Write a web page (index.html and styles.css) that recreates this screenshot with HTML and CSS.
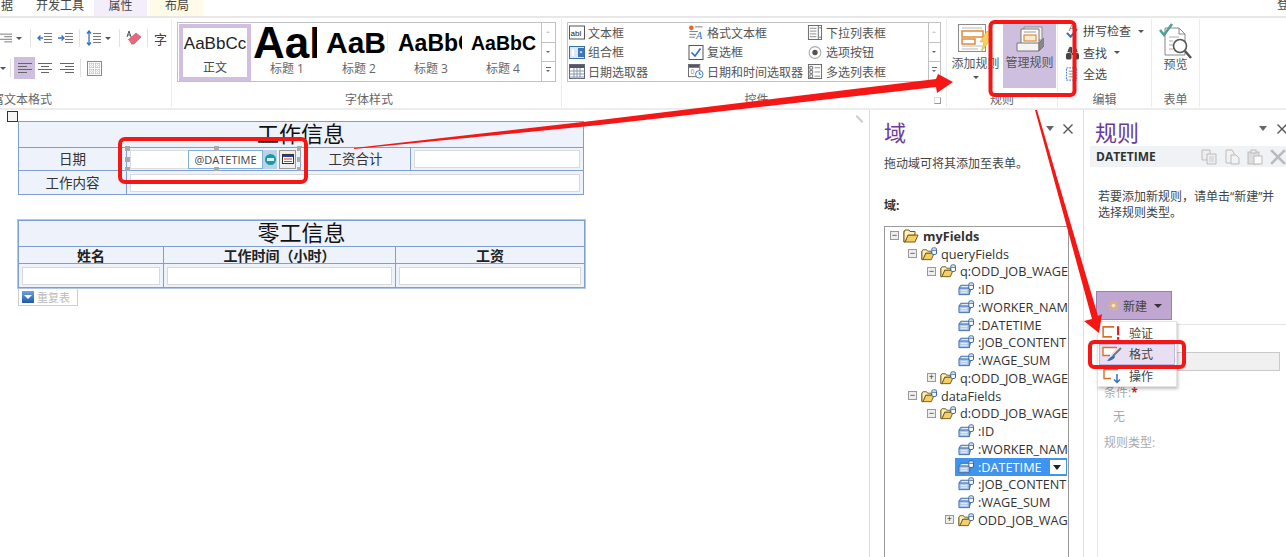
FILE: index.html
```html
<!DOCTYPE html>
<html lang="zh-CN">
<head>
<meta charset="utf-8">
<title>InfoPath 表单设计</title>
<link rel="stylesheet" href="styles.css">
</head>
<body>
<svg class="defs" width="0" height="0">
  <defs>
    <symbol id="folder" viewBox="0 0 16 14"><path d="M1 2V13H12L15 6H5L2 13" fill="#f6cf62" stroke="#6e5a1e"/><path d="M1 3L2 1H6L7 2.500H12V6H5L2 13L1 13Z" fill="#fff0bd" stroke="#6e5a1e"/></symbol>
    <symbol id="dbfolder" viewBox="0 0 17 14"><path d="M1 4V13H11L14 6H5L2 13" fill="#f6cf62" stroke="#6e5a1e"/><path d="M1 4L2 2.500H6L7 4H11V6H5L2 13H1Z" fill="#fff0bd" stroke="#6e5a1e"/><rect x="11.500" y=".5" width="5" height="7" rx="1.500" fill="#fff" stroke="#2d5c9e"/><path d="M12 3H16" stroke="#2d5c9e"/></symbol>
    <symbol id="leaf" viewBox="0 0 17 14"><path d="M1 6L3 3H14V5L12 13H1Z" fill="#a9c6ea" stroke="#3f6ca8"/><path d="M1 6H12V13" fill="none" stroke="#3f6ca8"/><path d="M3 8.500H10M3 10.500H10M4 4.500H13" stroke="#eaf2fb"/><rect x="11.500" y=".5" width="5" height="7" rx="1.500" fill="#fff" stroke="#2d5c9e"/><path d="M12 3H16" stroke="#2d5c9e"/></symbol>
    <symbol id="al" viewBox="0 0 14 12"><path d="M0 1.500H14M0 4.500H9M0 7.500H14M0 10.500H9" stroke="#666"/></symbol>
    <symbol id="ac" viewBox="0 0 14 12"><path d="M0 1.500H14M3 4.500H11M0 7.500H14M3 10.500H11" stroke="#666"/></symbol>
    <symbol id="ar" viewBox="0 0 14 12"><path d="M0 1.500H14M5 4.500H14M0 7.500H14M5 10.500H14" stroke="#666"/></symbol>
    <symbol id="outd" viewBox="0 0 15 12"><path d="M7 1.500H15M7 4.500H15M7 7.500H15M7 10.500H15" stroke="#777"/><path d="M6 6H1M3.500 3.500L1 6L3.500 8.500" fill="none" stroke="#2f74c4" stroke-width="1.300"/></symbol>
    <symbol id="ind" viewBox="0 0 15 12"><path d="M7 1.500H15M7 4.500H15M7 7.500H15M7 10.500H15" stroke="#777"/><path d="M0 6H6M3.500 3.500L6 6L3.500 8.500" fill="none" stroke="#2f74c4" stroke-width="1.300"/></symbol>
    <symbol id="lsp" viewBox="0 0 15 16"><path d="M7 3.500H15M7 6.500H15M7 9.500H15M7 12.500H15" stroke="#777"/><path d="M3 1V15M1 3.500L3 1L5 3.500M1 12.500L3 15L5 12.500" fill="none" stroke="#2f74c4" stroke-width="1.300"/></symbol>
    <symbol id="eraser" viewBox="0 0 16 17"><path d="M2 10L10 3L15 7L8 14H5Z" fill="#e8697f" stroke="#c84a62" stroke-width=".6"/><path d="M2 10L5 14" stroke="#fff"/><path d="M3 1L1 7M3 1L5 7M1.700 5H4.300" stroke="#555" fill="none"/></symbol>
    <symbol id="grid" viewBox="0 0 15 15"><rect x=".5" y=".5" width="14" height="14" fill="#fff" stroke="#888"/><path d="M3 2V13M6 2V13M9 2V13M12 2V13M2 3H13M2 6H13M2 9H13M2 12H13" stroke="#aaa" stroke-dasharray="1 1"/></symbol>
    <symbol id="c-text" viewBox="0 0 16 14"><rect x=".5" y=".5" width="15" height="13" fill="#fff" stroke="#555"/><text x="1.500" y="10" font-size="8" font-family="Liberation Sans" fill="#222">abl</text></symbol>
    <symbol id="c-combo" viewBox="0 0 16 13"><rect x=".5" y=".5" width="15" height="12" fill="#dce8f6" stroke="#3c6ea8"/><rect x="3" y="3" width="2" height="7" fill="#fff"/><rect x="9" y="2" width="6" height="9" fill="#3c76bd"/><path d="M10.500 5.500H13.500L12 7.500Z" fill="#fff"/></symbol>
    <symbol id="c-date" viewBox="0 0 16 15"><rect x=".5" y=".5" width="15" height="14" fill="#fff" stroke="#667"/><rect x="1" y="1" width="14" height="3" fill="#556"/><path d="M1 7H15M1 10H15M1 13H15M5 4V15M8 4V15M11 4V15" stroke="#89a"/></symbol>
    <symbol id="c-cal" viewBox="0 0 12 10"><rect x=".5" y=".5" width="11" height="9" fill="#fff" stroke="#333"/><rect x="1" y="1" width="10" height="2" fill="#2d3f9e"/><path d="M2 5H10" stroke="#d33"/><path d="M2 7.500H10" stroke="#4a6fc0"/></symbol>
    <symbol id="c-rich" viewBox="0 0 16 16"><circle cx="3" cy="3" r="2.500" fill="#e06a2b"/><path d="M7 2H15M1 7H10M1 10H8M1 13H7" stroke="#777"/><text x="8" y="15" font-size="11" font-style="italic" font-family="Liberation Serif" fill="#2f74c4">A</text></symbol>
    <symbol id="c-check" viewBox="0 0 15 15"><rect x=".5" y=".5" width="14" height="14" fill="#fff" stroke="#555"/><path d="M3 7.500L6.500 11L12 3.500" fill="none" stroke="#2f74c4" stroke-width="1.700"/></symbol>
    <symbol id="c-dt" viewBox="0 0 17 16"><rect x=".5" y=".5" width="12" height="13" fill="#fff" stroke="#667"/><rect x="1" y="1" width="11" height="3" fill="#556"/><text x="3" y="11" font-size="7" fill="#d9702a" font-family="Liberation Sans">0</text><circle cx="12" cy="11" r="4" fill="#fff" stroke="#2f74c4"/><path d="M12 8.500V11H14" stroke="#2f74c4" fill="none"/></symbol>
    <symbol id="c-list" viewBox="0 0 15 16"><rect x=".5" y=".5" width="14" height="15" fill="#fff" stroke="#666"/><path d="M2 3.500H9M2 6.500H9M2 9.500H9M2 12.500H9" stroke="#888"/><path d="M11 1V15" stroke="#666"/><path d="M12 3H14M12 13H14" stroke="#666"/></symbol>
    <symbol id="c-radio" viewBox="0 0 14 14"><circle cx="7" cy="7" r="5.500" fill="#fff" stroke="#aaa"/><circle cx="7" cy="7" r="2.500" fill="#555"/></symbol>
    <symbol id="c-multi" viewBox="0 0 15 16"><rect x=".5" y=".5" width="14" height="15" fill="#fff" stroke="#666"/><path d="M2 2.500H5V5.500H2ZM2 7H5V10H2ZM2 11.500H5V14.500H2Z" fill="none" stroke="#666"/><path d="M7 4H13M7 8.500H13M7 13H13" stroke="#888"/></symbol>
    <symbol id="r-add" viewBox="0 0 35 28"><rect x=".5" y=".5" width="27" height="27" fill="#fdfdfd" stroke="#8a8a8a"/><path d="M4 4H24M4 22H24M4 25H20" stroke="#bbb"/><rect x="4" y="7" width="21" height="6" fill="#fff" stroke="#e08a3c" stroke-width="1.500"/><rect x="4" y="15" width="13" height="5" fill="#fff" stroke="#e08a3c" stroke-width="1.500"/><path d="M29 7L22 18H26L23 28L34 14H29L33 7Z" fill="#f3d15f" stroke="#dba52c" stroke-width=".5"/></symbol>
    <symbol id="r-man" viewBox="0 0 28 26"><path d="M8 1H26V14H8Z" fill="#f2f2f2" stroke="#8a8a8a"/><path d="M5 3H23V18H5Z" fill="#fff" stroke="#777"/><path d="M8 6H20" stroke="#999"/><rect x="8" y="9" width="12" height="6" fill="#f9ecd2" stroke="#e08a3c" stroke-width="1.200"/><path d="M1 17H23V25H1Z" fill="#f5f5f5" stroke="#777"/><path d="M23 17L28 12V20L23 25Z" fill="#888" stroke="#777"/></symbol>
    <symbol id="spell" viewBox="0 0 16 16"><text x="4" y="8" font-size="9" fill="#555" font-family="Liberation Sans">A</text><path d="M2 10L6 14L13 6" fill="none" stroke="#2f74c4" stroke-width="2.200"/></symbol>
    <symbol id="find" viewBox="0 0 16 16"><path d="M3 7L5 2H7V8M13 7L11 2H9V8" fill="#555" stroke="#333"/><rect x="1" y="8" width="6" height="7" rx="2" fill="#444"/><rect x="9" y="8" width="6" height="7" rx="2" fill="#444"/><path d="M7 9H9" stroke="#333" stroke-width="2"/></symbol>
    <symbol id="selall" viewBox="0 0 16 16"><rect x="1.500" y="1.500" width="11" height="13" fill="none" stroke="#2f74c4" stroke-dasharray="2 1"/><path d="M4 5H10M4 8H10M4 11H10" stroke="#888"/></symbol>
    <symbol id="preview" viewBox="0 0 34 36"><path d="M6 5H20L26 11V32H6Z" fill="#fff" stroke="#888"/><path d="M20 5V11H26" fill="none" stroke="#888"/><path d="M10 14H20M10 18H14M10 22H14M10 26H14" stroke="#aaa"/><path d="M1 7L5 12L13 1" fill="none" stroke="#4d9f95" stroke-width="2.500"/><circle cx="21" cy="23" r="6.500" fill="#fff" stroke="#555" stroke-width="1.600"/><path d="M26 28L32 35" stroke="#555" stroke-width="2.500"/></symbol>
    <symbol id="copy" viewBox="0 0 16 16"><path d="M1 1H9V11H1Z" fill="#eee" stroke="#bbb"/><path d="M6 5H15V15H6Z" fill="#eee" stroke="#bbb"/><path d="M8 8H13M8 10H13M8 12H13" stroke="#ccc"/></symbol>
    <symbol id="cut" viewBox="0 0 16 16"><path d="M2 1H8L10 4V14H2Z" fill="#f2f2f2" stroke="#bbb"/><path d="M7 6H12L15 9V15H7Z" fill="#f2f2f2" stroke="#bbb"/></symbol>
    <symbol id="paste" viewBox="0 0 16 16"><rect x="1" y="3" width="11" height="12" fill="#ddd" stroke="#bbb"/><rect x="4" y="1" width="5" height="3" fill="#eee" stroke="#bbb"/><rect x="7" y="7" width="8" height="8" fill="#fafafa" stroke="#bbb"/></symbol>
    <symbol id="del" viewBox="0 0 14 14"><path d="M1 1L13 13M13 1L1 13" stroke="#bbb" stroke-width="2.400"/></symbol>
    <symbol id="close" viewBox="0 0 10 10"><path d="M.5 .5L9.500 9.500M9.500 .5L.5 9.500" stroke="#555" stroke-width="1.400"/></symbol>
    <symbol id="sun" viewBox="0 0 14 14"><path d="M7 1V13M1 7H13M2.700 2.700L11.300 11.300M11.300 2.700L2.700 11.300" stroke="#e9b84c" stroke-width="1.400"/><circle cx="7" cy="7" r="2" fill="#f8e6b8"/></symbol>
    <symbol id="m-val" viewBox="0 0 18 14"><path d="M11 1.500H1V10.500H9" fill="none" stroke="#d9702a" stroke-width="1.400"/><path d="M14.500 1V9M14.500 10.500V13" stroke="#d22" stroke-width="2"/></symbol>
    <symbol id="m-fmt" viewBox="0 0 20 16"><path d="M15 1.500H1V9.500H8" fill="#fff" stroke="#d9702a" stroke-width="1.400"/><path d="M19 2L11 10" stroke="#777" stroke-width="2"/><path d="M12 9C10 10 7 12 5 15C9 15 12 13 13 11Z" fill="#3a6ea8"/></symbol>
    <symbol id="m-act" viewBox="0 0 18 16"><path d="M15 1.500H1V10.500H8" fill="none" stroke="#d9702a" stroke-width="1.400"/><path d="M14 6V14M11 11.500L14 14.500L17 11.500" fill="none" stroke="#2f74c4" stroke-width="1.500"/></symbol>
  </defs>
</svg>

<div class="app">
  <nav class="tabs">
    <span class="tab tab-cut">据</span>
    <span class="tab tab-dev">开发工具</span>
    <span class="tab tab-prop">属性</span>
    <span class="tab tab-layout">布局</span>
    <span class="login">登</span>
  </nav>

  <section class="ribbon">
    <div class="group g1">
      <div class="g-body rows">
        <div class="tool-row">
          <svg class="ic ic-cutlist"><use href="#ar"/></svg><i class="caret c1"></i><b class="vsep s1"></b>
          <svg class="ic i15"><use href="#outd"/></svg><svg class="ic i15 m6"><use href="#ind"/></svg><b class="vsep s2"></b>
          <svg class="ic i15b"><use href="#lsp"/></svg><i class="caret c2"></i><b class="vsep s3"></b>
          <svg class="ic i16"><use href="#eraser"/></svg><b class="vsep s4"></b>
          <span class="zi">字</span>
        </div>
        <div class="tool-row row2">
          <i class="caret c0"></i><b class="vsep s5"></b>
          <span class="on"><svg class="ic i14"><use href="#al"/></svg></span>
          <svg class="ic i14 m3"><use href="#ac"/></svg><svg class="ic i14 m8"><use href="#ar"/></svg><b class="vsep s6"></b>
          <svg class="ic i-grid"><use href="#grid"/></svg>
        </div>
      </div>
      <div class="g-label lab-left">富文本格式</div>
    </div>

    <div class="group g2">
      <div class="g-body">
        <div class="gallery gal-style">
          <div class="style sel"><div class="s-sample s0">AaBbCc</div><div class="s-name">正文</div></div>
          <div class="style st1"><div class="s-sample s1b">AaBbCc</div><div class="s-name">标题 1</div></div>
          <div class="style st2"><div class="s-sample s2b">AaBbCc</div><div class="s-name">标题 2</div></div>
          <div class="style st3"><div class="s-sample s3b">AaBbCc</div><div class="s-name">标题 3</div></div>
          <div class="style st4"><div class="s-sample s4b">AaBbCc</div><div class="s-name">标题 4</div></div>
          <div class="scroller"><span class="up"></span><span class="dn"></span><span class="more"></span></div>
        </div>
      </div>
      <div class="g-label">字体样式</div>
    </div>

    <div class="group g3">
      <div class="g-body">
        <div class="gallery gal-ctl">
          <div class="ctl-grid">
            <span class="ctl"><svg><use href="#c-text"/></svg>文本框</span>
            <span class="ctl"><svg><use href="#c-rich"/></svg>格式文本框</span>
            <span class="ctl"><svg><use href="#c-list"/></svg>下拉列表框</span>
            <span class="ctl"><svg><use href="#c-combo"/></svg>组合框</span>
            <span class="ctl"><svg><use href="#c-check"/></svg>复选框</span>
            <span class="ctl"><svg><use href="#c-radio"/></svg>选项按钮</span>
            <span class="ctl"><svg><use href="#c-date"/></svg>日期选取器</span>
            <span class="ctl"><svg><use href="#c-dt"/></svg>日期和时间选取器</span>
            <span class="ctl"><svg><use href="#c-multi"/></svg>多选列表框</span>
          </div>
          <div class="scroller small"><span class="up"></span><span class="dn"></span><span class="more"></span></div>
        </div>
      </div>
      <div class="g-label">控件</div>
      <i class="launcher"></i>
    </div>

    <div class="group g4">
      <div class="g-body big-row">
        <div class="big add"><svg class="r-add"><use href="#r-add"/></svg><span>添加规则</span><i class="caret"></i></div>
        <div class="big man"><svg class="r-man"><use href="#r-man"/></svg><span>管理规则</span></div>
      </div>
      <div class="g-label">规则</div>
    </div>

    <div class="group g5">
      <div class="g-body edit">
        <span class="edit-item"><svg><use href="#spell"/></svg>拼写检查<i class="caret"></i></span>
        <span class="edit-item"><svg><use href="#find"/></svg>查找<i class="caret"></i></span>
        <span class="edit-item"><svg><use href="#selall"/></svg>全选</span>
      </div>
      <div class="g-label">编辑</div>
    </div>

    <div class="group g6">
      <div class="g-body prev"><svg class="r-prev"><use href="#preview"/></svg><span>预览</span></div>
      <div class="g-label">表单</div>
    </div>
    <div class="collapse"></div>
  </section>

  <main class="work">
    <div class="canvas">
      <div class="anchor"></div>
      <table class="form t1">
        <colgroup><col class="c108"><col class="c174"><col class="c110"><col></colgroup>
        <tr class="h26"><td colspan="4" class="title">工作信息</td></tr>
        <tr class="h23">
          <td class="lbl">日期</td>
          <td class="datecell">
            <div class="picker">
              <span class="dp-blank"></span>
              <span class="dp-val">@DATETIME</span>
              <span class="dp-fn"><i></i></span>
              <span class="dp-cal"><svg><use href="#c-cal"/></svg></span>
            </div>
            <u class="h tl"></u><u class="h tc"></u><u class="h tr"></u><u class="h ml"></u><u class="h mr"></u><u class="h bl"></u><u class="h bc"></u><u class="h br"></u>
          </td>
          <td class="lbl">工资合计</td>
          <td class="lbl"><div class="input"></div></td>
        </tr>
        <tr class="h24">
          <td class="lbl">工作内容</td>
          <td colspan="3" class="lbl"><div class="input"></div></td>
        </tr>
      </table>

      <table class="form t2">
        <colgroup><col class="c145"><col class="c232"><col></colgroup>
        <tr class="h25"><td colspan="3" class="title">零工信息</td></tr>
        <tr class="h17 bold"><td>姓名</td><td>工作时间（小时）</td><td>工资</td></tr>
        <tr class="h24"><td class="lbl"><div class="input"></div></td><td class="lbl"><div class="input"></div></td><td class="lbl"><div class="input"></div></td></tr>
      </table>
      <div class="repeat"><span class="rep-ic"></span>重复表</div>
    </div>

    <div class="gutter"><i></i></div>

    <aside class="pane fields">
      <header class="p-head"><h2>域</h2><i class="tri"></i><svg class="x"><use href="#close"/></svg></header>
      <p class="hint">拖动域可将其添加至表单。</p>
      <p class="f-lab">域:</p>
      <div class="tree">
        <div class="node l0 strong"><b class="box">−</b><svg class="ti"><use href="#folder"/></svg>myFields</div>
        <div class="node l1"><b class="box">−</b><svg class="ti"><use href="#dbfolder"/></svg>queryFields</div>
        <div class="node l2"><b class="box">−</b><svg class="ti"><use href="#dbfolder"/></svg>q:ODD_JOB_WAGE</div>
        <div class="node l3"><b class="nobox"></b><svg class="ti"><use href="#leaf"/></svg>:ID</div>
        <div class="node l3"><b class="nobox"></b><svg class="ti"><use href="#leaf"/></svg>:WORKER_NAME</div>
        <div class="node l3"><b class="nobox"></b><svg class="ti"><use href="#leaf"/></svg>:DATETIME</div>
        <div class="node l3"><b class="nobox"></b><svg class="ti"><use href="#leaf"/></svg>:JOB_CONTENT</div>
        <div class="node l3"><b class="nobox"></b><svg class="ti"><use href="#leaf"/></svg>:WAGE_SUM</div>
        <div class="node l2"><b class="box">+</b><svg class="ti"><use href="#dbfolder"/></svg>q:ODD_JOB_WAGE</div>
        <div class="node l1"><b class="box">−</b><svg class="ti"><use href="#dbfolder"/></svg>dataFields</div>
        <div class="node l2"><b class="box">−</b><svg class="ti"><use href="#dbfolder"/></svg>d:ODD_JOB_WAGE</div>
        <div class="node l3"><b class="nobox"></b><svg class="ti"><use href="#leaf"/></svg>:ID</div>
        <div class="node l3"><b class="nobox"></b><svg class="ti"><use href="#leaf"/></svg>:WORKER_NAME</div>
        <div class="node l3 picked"><b class="nobox"></b><span class="pick-bar"><svg class="ti"><use href="#leaf"/></svg>:DATETIME<em class="pick-btn"><i></i></em></span></div>
        <div class="node l3"><b class="nobox"></b><svg class="ti"><use href="#leaf"/></svg>:JOB_CONTENT</div>
        <div class="node l3"><b class="nobox"></b><svg class="ti"><use href="#leaf"/></svg>:WAGE_SUM</div>
        <div class="node l3"><b class="box">+</b><svg class="ti"><use href="#dbfolder"/></svg>ODD_JOB_WAGE</div>
      </div>
    </aside>

    <aside class="pane rules">
      <header class="p-head"><h2>规则</h2><i class="tri"></i><svg class="x"><use href="#close"/></svg></header>
      <div class="r-bar"><strong>DATETIME</strong><svg><use href="#copy"/></svg><svg><use href="#cut"/></svg><svg><use href="#paste"/></svg><svg><use href="#del"/></svg></div>
      <p class="r-hint">若要添加新规则，请单击“新建”并<br>选择规则类型。</p>
      <button class="new-btn"><svg><use href="#sun"/></svg>新建<i></i></button>
      <div class="r-form">
        <div class="r-input"></div>
        <div class="r-cap">条件:<em>*</em></div>
        <div class="r-none">无</div>
        <div class="r-cap type">规则类型:</div>
      </div>
      <div class="menu">
        <div class="m-item"><svg><use href="#m-val"/></svg>验证</div>
        <div class="m-item hot"><svg><use href="#m-fmt"/></svg>格式</div>
        <div class="m-item"><svg><use href="#m-act"/></svg>操作</div>
      </div>
    </aside>
  </main>
</div>

<svg class="marks" viewBox="0 0 1286 557">
  <rect x="120" y="139" width="186" height="43" rx="5"/>
  <rect x="990.500" y="22" width="84" height="73" rx="4"/>
  <rect x="1090" y="342" width="94" height="25" rx="4"/>
  <path class="fill" d="M354 148L600 120L936 79L938 74L953 82L937 93L936 87L600 125L354 149Z"/>
  <path class="fill" d="M1035 110H1037L1098 316L1102 314L1099 333L1084 321L1092 319Z"/>
</svg>
</body>
</html>
```

FILE: styles.css
```css
* { box-sizing: border-box; }
html, body { margin: 0; height: 557px; overflow: hidden; background: #fff; }
body { font: 12px "Open Sans", "Noto Sans CJK SC", sans-serif; color: #444; position: relative; }
p, h2 { margin: 0; }
i, em, b, u { font-style: normal; text-decoration: none; display: block; }
.defs { position: absolute; }
.app { width: 1286px; height: 557px; display: flex; flex-direction: column; overflow: hidden; }

/* tabs */
.tabs { height: 18px; display: flex; border-bottom: 2px solid #e8e8e8; font-size: 12px; line-height: 11px; color: #444; flex: none; }
.tab { height: 16px; display: block; text-align: center; overflow: hidden; }
.tab-cut { width: 13px; text-align: right; }
.tab-dev { margin-left: 23px; width: 58px; text-align: left; }
.tab-prop { width: 53px; background: #f3eefa; margin-left: 0; }
.tab-layout { width: 54px; margin-left: 3px; background: #fffbe8; }
.login { margin-left: auto; width: 9px; overflow: hidden; line-height: 10px; }

/* ribbon */
.ribbon { height: 92px; display: flex; border-bottom: 2px solid #ececec; flex: none; }
.group { position: relative; display: flex; flex-direction: column; border-right: 1px solid #ececec; height: 88px; margin-top: 1px; }
.g-body { height: 74px; flex: none; }
.g-label { height: 14px; line-height: 14px; text-align: center; color: #666; font-size: 12px; white-space: nowrap; }
.g1 { width: 172px; overflow: hidden; }
.g2 { width: 390px; padding-left: 5px; }
.g3 { width: 385px; padding-left: 5px; }
.g4 { width: 111px; }
.g5 { width: 94px; }
.g6 { width: 48px; }
.lab-left { text-align: left; margin-left: -8px; }
.collapse { flex: 1; }

.rows { display: flex; flex-direction: column; padding-top: 9px; }
.tool-row { display: flex; align-items: center; height: 20px; }
.row2 { margin-top: 9px; height: 22px; }
.ic { display: block; flex: none; }
.ic-cutlist { width: 12px; height: 12px; }
.i15 { width: 15px; height: 12px; }
.i15b { width: 15px; height: 16px; }
.i16 { width: 16px; height: 17px; }
.i14 { width: 14px; height: 12px; }
.i-grid { width: 15px; height: 15px; }
.m6 { margin-left: 6px; }
.m3 { margin-left: 3px; }
.m8 { margin-left: 8px; }
.caret { width: 0; height: 0; border: 3px solid transparent; border-top: 3px solid #555; border-bottom: 0; }
.c1 { margin-left: 4px; margin-right: 8px; }
.c2 { margin-left: 4px; margin-right: 8px; }
.c0 { margin-left: 0; }
.vsep { width: 1px; height: 18px; background: #e2e2e2; }
.s1 { margin-right: 6px; }
.s2 { margin: 0 6px; }
.s3 { margin-right: 6px; }
.s4 { margin: 0 6px 0 5px; }
.s5 { margin: 0 3px 0 4px; }
.s6 { margin: 0 6px; }
.on { width: 21px; height: 22px; background: #cfbfdf; display: flex; align-items: center; justify-content: center; }
.zi { font-size: 13px; color: #444; }

.gallery { position: relative; display: flex; margin-top: 3px; height: 60px; border: 1px solid #c2c2c2; background: #fff; }
.gal-style { width: 379px; padding: 1px 0 0 1px; }
.style { width: 72px; height: 57px; overflow: hidden; text-align: center; flex: none; }
.style.sel { border: 4px solid #d0bfe0; padding-top: 0; }
.s-sample { height: 38px; white-space: nowrap; overflow: hidden; color: #000; display: flex; align-items: center; justify-content: flex-start; font-family: "Liberation Sans", sans-serif; }
.s0 { font-size: 17px; height: 32px; color: #222; justify-content: center; }
.s1b { font-size: 44px; font-weight: 700; width: 64px; margin-left: 2px; }
.s2b { font-size: 30px; font-weight: 700; width: 62px; margin-left: 3px; }
.s3b { font-size: 23px; font-weight: 700; width: 64px; margin-left: 3px; }
.s4b { font-size: 19.500px; font-weight: 700; width: 65px; margin-left: 4px; }
.st1, .st2, .st3, .st4 { width: 72px; }
.s-name { color: #666; font-size: 12px; line-height: 14px; }
.sel .s-name { margin-top: 1px; color: #444; }
.scroller { position: absolute; right: 0; top: 0; bottom: 0; width: 14px; display: flex; flex-direction: column; border-left: 1px solid #c2c2c2; }
.scroller span { flex: 1; border-bottom: 1px solid #c2c2c2; position: relative; }
.scroller span:last-child { border-bottom: 0; }
.scroller span::after { content: ""; position: absolute; left: 4px; top: 8px; border: 2.500px solid transparent; border-top-color: #666; border-bottom: 0; }
.scroller .up::after { border-top: 0; border-bottom: 2.500px solid #ccc; }
.scroller .more::before { content: ""; position: absolute; left: 4px; top: 5px; width: 5px; height: 1px; background: #666; }
.scroller.small { width: 12px; }
.scroller.small span::after { left: 3px; }
.scroller.small .more::before { left: 3px; }

.gal-ctl { width: 374px; }
.ctl-grid { display: grid; grid-template-columns: 119px 119px 110px; grid-auto-rows: 19.500px; padding: 0 0 0 1px; }
.ctl { display: flex; align-items: center; white-space: nowrap; color: #555; font-size: 12px; }
.ctl svg { width: 16px; height: 15px; margin-right: 3px; flex: none; }
.launcher { position: absolute; right: 5px; bottom: 3px; width: 7px; height: 7px; border: 1px solid #999; border-top-color: #ddd; border-left-color: #ddd; }

.big-row { display: flex; padding-left: 1px; }
.big { display: flex; flex-direction: column; align-items: center; color: #555; white-space: nowrap; }
.big span { display: block; line-height: 14px; }
.add { width: 55px; padding-top: 5px; }
.r-add { width: 35px; height: 28px; }
.add span { margin-top: 5px; }
.add .caret { margin-top: 5px; }
.man { width: 53px; height: 66px; margin-top: 3px; background: #cfbfdf; padding-top: 4px; }
.r-man { width: 28px; height: 26px; }
.man span { margin-top: 4px; }

.edit { display: flex; flex-direction: column; padding: 1.500px 0 0 7px; gap: .5px; }
.edit-item { display: flex; align-items: center; height: 21px; color: #444; white-space: nowrap; }
.edit-item svg { width: 15px; height: 16px; margin-right: 3px; }
.edit-item .caret { margin-left: 7px; }
.prev { display: flex; flex-direction: column; align-items: center; padding-top: 4px; color: #555; }
.r-prev { width: 34px; height: 36px; }
.prev span { line-height: 14px; margin-top: -1px; }

/* workspace */
.work { flex: 1; display: flex; min-height: 0; }
.canvas { width: 852px; flex: none; padding: 1px 0 0 18px; position: relative; }
.anchor { position: absolute; left: 7px; top: 1px; width: 11px; height: 11px; border: 1px solid #333; background: #f6f6f6; }
.form { border-collapse: collapse; table-layout: fixed; width: 566px; font-family: "Noto Sans CJK SC", sans-serif; color: #333; }
.form td { border: 1px solid #7f9fd0; background: #edf2fb; text-align: center; padding: 0; line-height: 14px; position: relative; font-size: 13.500px; }
.c108 { width: 108px; }
.c174 { width: 174px; }
.c110 { width: 110px; }
.c145 { width: 145px; }
.c232 { width: 232px; }
.h26 { height: 26px; }
.h25 { height: 25px; }
.h23 { height: 23px; }
.h24 { height: 24px; }
.h17 { height: 17px; }
.form .title { font-size: 22px; color: #111; line-height: 20px; padding-bottom: 5px; }
.form .lbl { padding: 1px 2px 3px; }
.form .bold td { font-weight: 700; color: #222; font-size: 14px; padding-bottom: 1px; }
.t1 { margin-top: 10px; }
.t2 { margin-top: 25px; outline: 1px solid #b4c6e6; width: 567px; }
.input { height: 18px; background: #fff; border: 1px solid #d9d9d9; }
.lbl .input { margin: 1px 1px -1px; }
.form .datecell { background: #edf2fb; }
.picker { display: flex; align-items: stretch; height: 19px; margin: 0 0 0 3px; }
.dp-blank { width: 58px; background: #fff; border: 1px solid #ddd; border-right: 0; }
.dp-val { width: 75px; border: 1px solid #82b0e0; font: 11px/17px "Open Sans", sans-serif; color: #444; background: #fff; }
.dp-fn { width: 14px; background: #b9d3e8; display: flex; align-items: center; justify-content: center; }
.dp-fn i { width: 11px; height: 11px; border-radius: 50%; background: #1d9aa0; position: relative; }
.dp-fn i::after { content: ""; position: absolute; left: 2px; right: 2px; top: 4px; height: 3px; background: #d8f2f2; }
.dp-cal { width: 17px; margin-left: 2px; border: 1px solid #999; background: #eee; display: flex; align-items: center; justify-content: center; }
.dp-cal svg { width: 12px; height: 10px; }
.h { position: absolute; width: 5px; height: 5px; background: #aaa; }
.tl { left: -2px; top: -2px; } .tc { left: 50%; top: -2px; } .tr { right: -2px; top: -2px; }
.ml { left: -2px; top: 9px; } .mr { right: -2px; top: 9px; }
.bl { left: -2px; bottom: -2px; } .bc { left: 50%; bottom: -2px; } .br { right: -2px; bottom: -2px; }
.repeat { width: 60px; height: 18px; border: 1px solid #cfcfcf; border-top: 0; display: flex; align-items: center; color: #bbb; font-size: 11px; gap: 3px; padding-left: 3px; }
.rep-ic { display: block; width: 12px; height: 12px; background: linear-gradient(#6fa4e4, #1e58a8); position: relative; }
.rep-ic::after { content: ""; position: absolute; left: 2px; top: 4px; border: 4px solid transparent; border-top-color: #fff; border-bottom: 0; }

.gutter { width: 18px; flex: none; border-right: 1px solid #dcdcdc; background: #fff; position: relative; }
.gutter i { position: absolute; left: 3px; top: 8px; width: 9px; height: 2px; background: #ccc; transform: rotate(45deg); }

.pane { flex: none; position: relative; }
.fields { width: 214px; border-right: 1px solid #e0e0e0; padding: 0 0 0 14px; }
.rules { flex: 1; overflow: hidden; }
.p-head { height: 36px; display: flex; align-items: center; position: relative; }
.p-head h2 { font-size: 22px; font-weight: 400; color: #6a3a9a; line-height: 30px; margin-top: 8px; }
.rules .p-head { padding-left: 11px; }
.tri { position: absolute; top: 16px; left: 162px; border: 4.500px solid transparent; border-top: 5px solid #666; border-bottom: 0; }
.x { position: absolute; top: 14px; left: 179px; width: 10px; height: 10px; }
.rules .tri { left: 175px; }
.rules .x { left: 193px; }
.hint { margin-top: 10px; line-height: 16px; color: #444; font-size: 12px; }
.f-lab { margin-top: 26px; font-weight: 700; line-height: 16px; font-size: 12px; color: #333; }
.tree { margin-top: 12px; width: 185px; height: 340px; border: 1px solid #999; background: #fff; overflow: hidden; font-size: 12px; color: #333; }
.node { height: 17.750px; display: flex; align-items: center; white-space: nowrap; padding-left: 5px; font-size: 12.700px; }
.l1 { padding-left: 23px; }
.l2 { padding-left: 42px; }
.l3 { padding-left: 60px; }
.strong { font-weight: 700; }
.box { width: 9px; height: 9px; margin-right: 4px; flex: none; border: 1px solid #999; background: #eee; font: 9px/7px "Liberation Sans", sans-serif; text-align: center; color: #333; }
.nobox { width: 13px; height: 1px; flex: none; }
.ti { width: 16px; height: 14px; margin-right: 4px; flex: none; }
.pick-bar { display: flex; align-items: center; flex: none; width: 112px; height: 18px; background: #3f94ed; color: #fff; margin-left: -3px; padding-left: 3px; position: relative; }
.pick-btn { position: absolute; right: 0; top: 1px; bottom: 1px; width: 18px; background: #fff; border: 1px solid #3f94ed; }
.pick-btn i { position: absolute; left: 3px; top: 5px; border: 4px solid transparent; border-top: 5px solid #222; border-bottom: 0; }

.r-bar { display: flex; align-items: center; margin: 0 0 0 6px; height: 21px; background: #f0f3f5; padding-left: 6px; gap: 7px; }
.r-bar strong { width: 103px; font-size: 12px; color: #333; }
.r-bar svg { width: 16px; height: 16px; flex: none; }
.r-hint { margin: 22px 0 0 14px; line-height: 16px; font-size: 12px; color: #444; white-space: nowrap; }
.new-btn { display: flex; align-items: center; margin: 70px 0 0 12px; width: 76px; height: 29px; background: #c0a7d2; border: 1px solid #9a7fb5; padding: 0 0 0 10px; font: 12px "Noto Sans CJK SC", sans-serif; color: #444; }
.new-btn svg { width: 13px; height: 13px; margin-right: 3px; }
.new-btn i { margin-left: 7px; border: 4px solid transparent; border-top: 4px solid #333; border-bottom: 0; }
.r-form { margin: 4px 0 0 13px; border-top: 1px solid #e6e6e6; border-left: 1px solid #e6e6e6; height: 240px; padding-top: 27px; position: relative; }
.r-input { height: 19px; margin: 0 6px 0 0; background: #f0f0f0; border: 1px solid #c9c9c9; }
.r-cap { color: #aaa; font-weight: 400; line-height: 14px; margin: 15px 0 0 6px; }
.r-cap em { display: inline; color: #d22; font-weight: 700; }
.r-none { color: #aaa; margin: 10px 0 0 15px; line-height: 14px; }
.type { margin-top: 12px; }
.menu { position: absolute; left: 13px; top: 211px; width: 80px; height: 66px; background: #fff; border: 1px solid #e4e4e4; box-shadow: 1px 2px 3px rgba(0, 0, 0, .25); }
.m-item { display: flex; align-items: center; height: 21.500px; padding-left: 3px; color: #444; margin: 0 1px; }
.m-item svg { width: 20px; height: 16px; margin-right: 7px; flex: none; }
.m-item.hot { background: #e8dff2; border: 1px solid #c7b3dc; padding-left: 2px; }

/* annotations */
.marks { position: absolute; left: 0; top: 0; width: 1286px; height: 557px; pointer-events: none; }
.marks rect { fill: none; stroke: #f51616; stroke-width: 4; }
.marks .fill { fill: #f51616; }
```
